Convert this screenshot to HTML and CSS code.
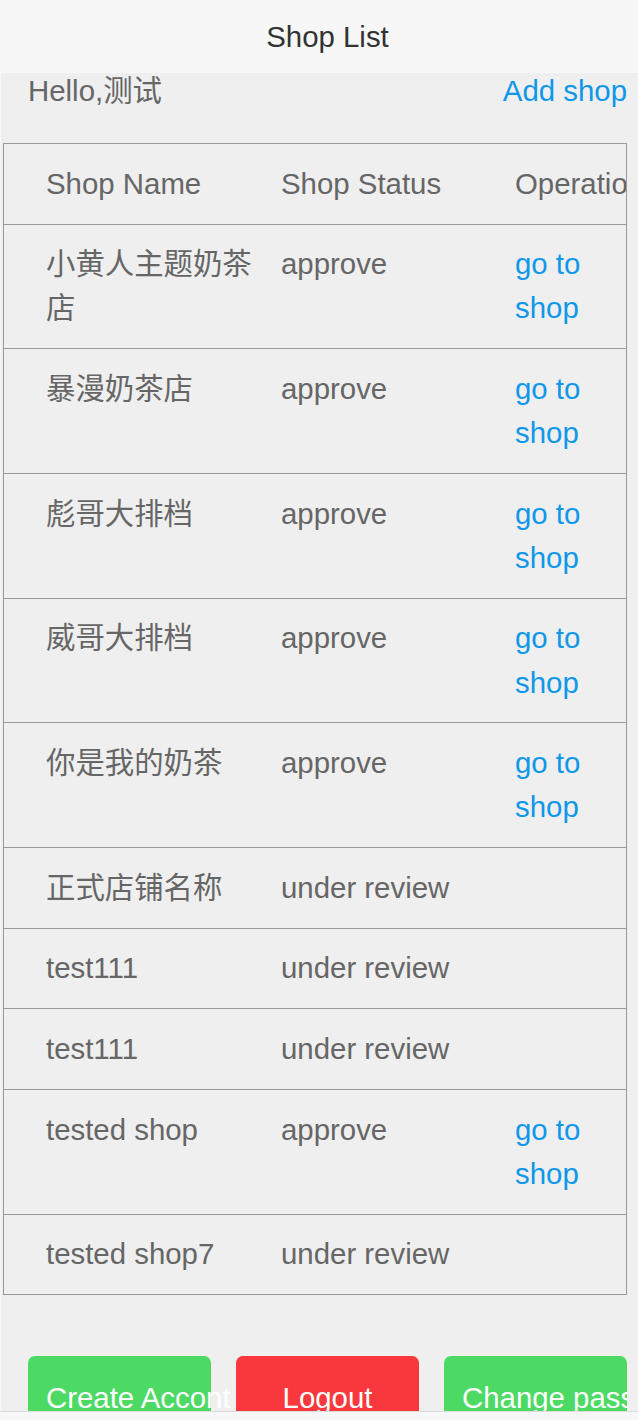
FILE: index.html
```html
<!DOCTYPE html>
<html lang="en">
<head>
<meta charset="utf-8">
<title>Shop List</title>
<link rel="stylesheet" href="styles.css">
</head>
<body>
<div class="app">
  <header class="navbar"><span class="navbar-title">Shop List</span></header>
  <main class="main">
    <div class="content">
      <div class="greet-row">
        <span class="greet">Hello,测试</span>
        <a class="link add-shop">Add shop</a>
      </div>
      <div class="table">
        <div class="row head">
          <div class="cell c1">Shop Name</div>
          <div class="cell c2">Shop Status</div>
          <div class="cell c3 nowrap">Operation</div>
        </div>
        <div class="row">
          <div class="cell c1"><div class="name">小黄人主题奶茶店</div></div>
          <div class="cell c2">approve</div>
          <div class="cell c3"><a class="link">go to shop</a></div>
        </div>
        <div class="row">
          <div class="cell c1"><div class="name">暴漫奶茶店</div></div>
          <div class="cell c2">approve</div>
          <div class="cell c3"><a class="link">go to shop</a></div>
        </div>
        <div class="row">
          <div class="cell c1"><div class="name">彪哥大排档</div></div>
          <div class="cell c2">approve</div>
          <div class="cell c3"><a class="link">go to shop</a></div>
        </div>
        <div class="row">
          <div class="cell c1"><div class="name">威哥大排档</div></div>
          <div class="cell c2">approve</div>
          <div class="cell c3"><a class="link">go to shop</a></div>
        </div>
        <div class="row">
          <div class="cell c1"><div class="name">你是我的奶茶</div></div>
          <div class="cell c2">approve</div>
          <div class="cell c3"><a class="link">go to shop</a></div>
        </div>
        <div class="row">
          <div class="cell c1"><div class="name">正式店铺名称</div></div>
          <div class="cell c2">under review</div>
          <div class="cell c3"></div>
        </div>
        <div class="row">
          <div class="cell c1"><div class="name">test111</div></div>
          <div class="cell c2">under review</div>
          <div class="cell c3"></div>
        </div>
        <div class="row">
          <div class="cell c1"><div class="name">test111</div></div>
          <div class="cell c2">under review</div>
          <div class="cell c3"></div>
        </div>
        <div class="row">
          <div class="cell c1"><div class="name">tested shop</div></div>
          <div class="cell c2">approve</div>
          <div class="cell c3"><a class="link">go to shop</a></div>
        </div>
        <div class="row">
          <div class="cell c1"><div class="name">tested shop7</div></div>
          <div class="cell c2">under review</div>
          <div class="cell c3"></div>
        </div>
      </div>
      <div class="actions">
        <button class="btn btn-green">Create Accont</button>
        <button class="btn btn-red">Logout</button>
        <button class="btn btn-green">Change password</button>
      </div>
    </div>
  </main>
  <footer class="bottom-bar"></footer>
</div>
</body>
</html>
```

FILE: styles.css
```css
html, body {
  margin: 0;
  padding: 0;
  height: 1420px;
  overflow: hidden;
}

body {
  font-family: "Liberation Sans", Arial, "Noto Sans CJK SC", sans-serif;
  background: #f7f7f7;
}

.app {
  height: 1420px;
  display: flex;
  flex-direction: column;
}

.navbar {
  height: 73px;
  flex: none;
  background: #f7f7f7;
  display: flex;
  align-items: center;
  justify-content: center;
  padding-left: 17px;
}

.navbar-title {
  font-size: 29.4px;
  color: #333;
}

.main {
  flex: 1;
  min-height: 0;
  margin-left: 1px;
  background: #efefef;
  overflow: hidden;
}

.content {
  margin-right: 11px;
  overflow: hidden;
  height: 100%;
}

.greet-row {
  display: flex;
  justify-content: space-between;
  align-items: baseline;
  height: 36px;
  line-height: 36px;
  padding-left: 27px;
  font-size: 29.4px;
}

.greet {
  color: #666;
}

.link {
  color: #0f97ea;
  text-decoration: none;
}

.table {
  margin: 34px 0 0 2px;
  border: 1px solid #9a9a9a;
  overflow: hidden;
  font-size: 29.4px;
  line-height: 44.1px;
  color: #666;
}

.row {
  display: grid;
  grid-template-columns: 235px 234px 1fr;
  border-bottom: 1px solid #9a9a9a;
}

.row:last-child {
  border-bottom: none;
}

.cell {
  padding: 17.75px 0 17.75px 42px;
  min-width: 0;
}

.name {
  width: 215px;
}

.nowrap {
  white-space: nowrap;
}

.actions {
  display: flex;
  gap: 25px;
  margin: 61px 0 0 27px;
}

.btn {
  flex: 1;
  min-width: 0;
  height: 84px;
  padding: 0 18px;
  border: none;
  border-radius: 7px;
  font-family: "Liberation Sans", Arial, sans-serif;
  font-size: 29.4px;
  line-height: 84px;
  color: #fff;
  text-align: center;
  white-space: nowrap;
  overflow: visible;
}

.btn-green {
  background: #4cd964;
}

.btn-red {
  background: #f8383c;
}

.bottom-bar {
  height: 8px;
  flex: none;
  background: #f7f7f7;
  border-top: 1px solid #dcdcdc;
}
```
